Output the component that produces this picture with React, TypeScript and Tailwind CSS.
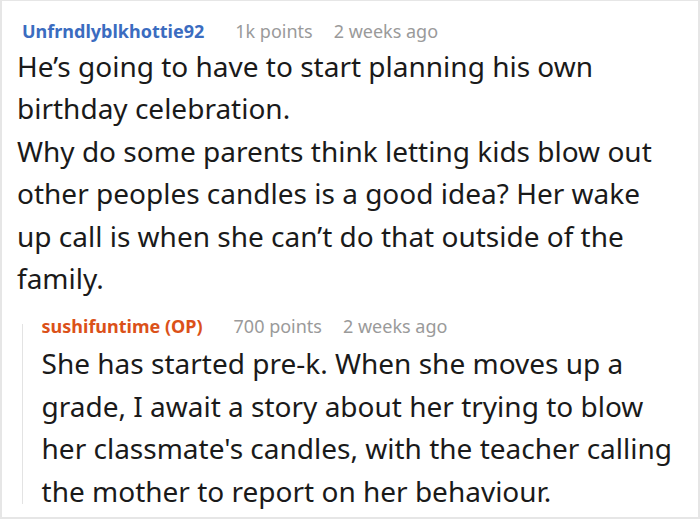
const font = { fontFamily: '"Noto Sans", "Open Sans", sans-serif' };

function Meta({ name, color, points, ago }: { name: string; color: string; points: string; ago: string }) {
  return (
    <div className="flex items-center h-[24px] text-[18px] leading-[24px]">
      <span className={`font-bold ${color}`}>{name}</span>
      <span className="ml-[31px] text-[#9a9a9a]">{points}</span>
      <span className="ml-[21px] text-[#9a9a9a]">{ago}</span>
    </div>
  );
}

export default function App() {
  return (
    <div className="w-[700px] h-[520px] bg-white" style={font}>
      <div className="h-[519px] border-t border-l-2 border-r-2 border-b-2 border-[#e6e6e6] pt-[18px]">
        <div className="pl-[20px]">
          <Meta name="Unfrndlyblkhottie92" color="text-[#3b6cc0]" points="1k points" ago="2 weeks ago" />
        </div>
        <div className="pl-[15px] pr-[23px] pt-[2px] text-[28px] leading-[42.4px] text-[#1a1a1a]">
          <p>He’s going to have to start planning his own birthday celebration.</p>
          <p>
            Why do some parents think letting kids blow out other peoples candles is a good idea? Her wake up call is
            when she can’t do that outside of the family.
          </p>
        </div>
        {/* reply */}
        <div className="mt-[15px] ml-[20px] flex">
          <div className="w-[2px] mt-[10px] mb-[8px] bg-[#e3e3e3]" />
          <div className="pl-[19px]">
            <Meta name="sushifuntime (OP)" color="text-[#db5119]" points="700 points" ago="2 weeks ago" />
            <div className="pt-[4px] pr-[23px] text-[28px] leading-[42.4px] text-[#1a1a1a]">
              <p>
                She has started pre-k. When she moves up a grade, I await a story about her trying to blow her
                classmate's candles, with the teacher calling the mother to report on her behaviour.
              </p>
            </div>
          </div>
        </div>
      </div>
    </div>
  );
}
